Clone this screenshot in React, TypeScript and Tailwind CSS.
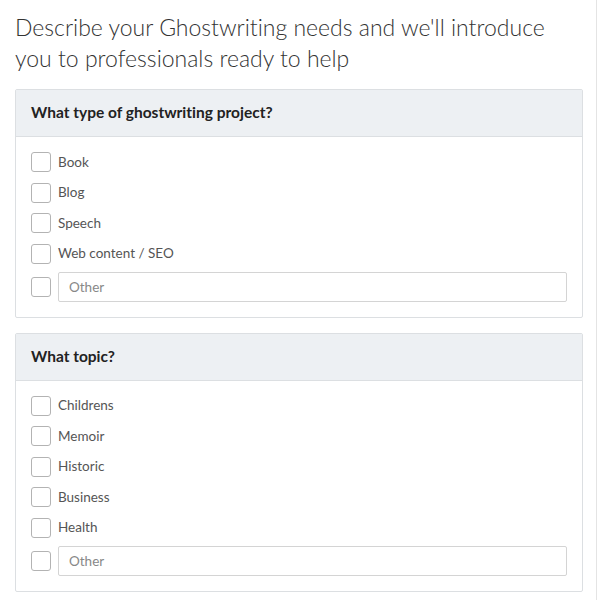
import { useState } from 'react';

interface Section {
  title: string;
  options: string[];
}

const sections: Section[] = [
  {
    title: 'What type of ghostwriting project?',
    options: ['Book', 'Blog', 'Speech', 'Web content / SEO'],
  },
  {
    title: 'What topic?',
    options: ['Childrens', 'Memoir', 'Historic', 'Business', 'Health'],
  },
];

function Box({ checked, onClick }: { checked: boolean; onClick: () => void }) {
  return (
    <button
      type="button"
      onClick={onClick}
      className="w-[20px] h-[20px] shrink-0 rounded-[3px] border border-[#b3b3b3] bg-white flex items-center justify-center"
    >
      {checked && <span className="text-[13px] leading-none text-[#333]">✓</span>}
    </button>
  );
}

function QuestionCard({ section }: { section: Section }) {
  const [checked, setChecked] = useState<{ [key: string]: boolean }>({});
  const toggle = (k: string) => setChecked((c) => ({ ...c, [k]: !c[k] }));

  return (
    <div className="border border-[#dcdfe2] rounded-[2px] bg-white">
      <div className="h-[47px] bg-[#edf0f3] border-b border-[#dcdfe2] flex items-center px-[15px]">
        <h3 className="text-[15.5px] font-bold text-[#222]">{section.title}</h3>
      </div>
      <div className="px-[15px] pt-[15px] pb-[15px] flex flex-col gap-[10.5px]">
        {section.options.map((opt) => (
          <label key={opt} className="flex items-center gap-[7px] h-[20px] cursor-pointer">
            <Box checked={!!checked[opt]} onClick={() => toggle(opt)} />
            <span className="text-[13.5px] text-[#555]">{opt}</span>
          </label>
        ))}
        <div className="flex items-center gap-[7px] -mt-[2.5px]">
          <Box checked={!!checked.__other} onClick={() => toggle('__other')} />
          <input
            type="text"
            placeholder="Other"
            className="flex-1 h-[30px] border border-[#d4d4d4] rounded-[2px] px-[10px] text-[13.5px] text-[#555] placeholder:text-[#888] outline-none"
          />
        </div>
      </div>
    </div>
  );
}

export default function App() {
  return (
    <div
      className="w-[597px] min-h-[600px] bg-white border-r border-[#e4e4e4] text-[#333] [font-variant-ligatures:none]"
      style={{ fontFamily: 'Lato, "Open Sans", sans-serif' }}
    >
      <div className="pl-[15px] pt-[12px] pb-[16px] w-[583px]">
        <h1 className="text-[23px] font-light leading-[31px] text-[#333] mb-[15px]">
          Describe your Ghostwriting needs and we'll introduce you to professionals ready to help
        </h1>
        <div className="flex flex-col gap-[15px]">
          {sections.map((s) => (
            <QuestionCard key={s.title} section={s} />
          ))}
        </div>
      </div>
    </div>
  );
}
